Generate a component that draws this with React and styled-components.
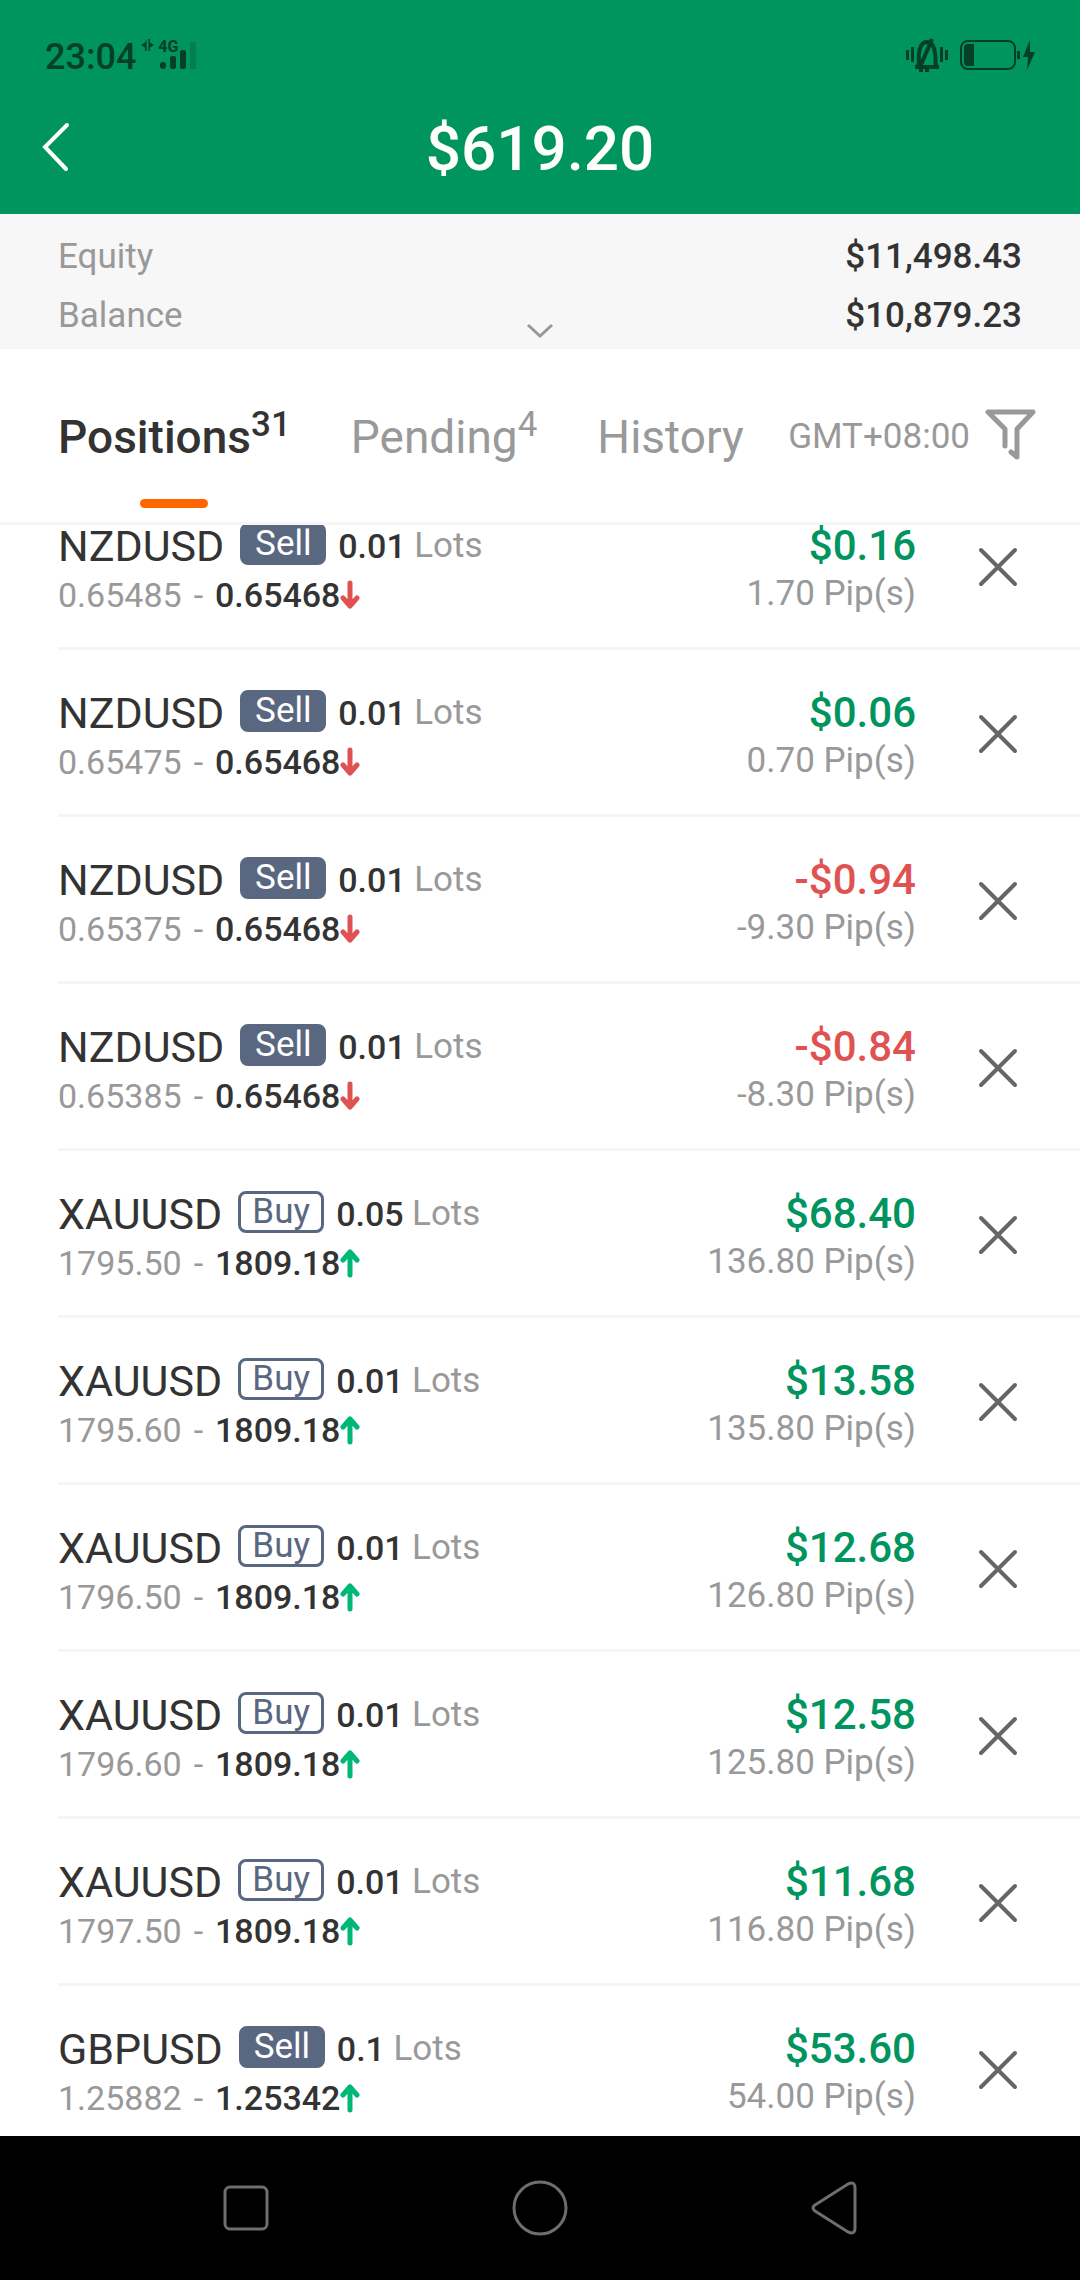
import React from 'react';
import styled, { createGlobalStyle } from 'styled-components';

const GlobalStyle = createGlobalStyle`
	* {
		box-sizing: border-box;
	}

	body {
		margin: 0;
		background: #fff;
		color: #333;
		font-family: Roboto, 'Liberation Sans', sans-serif;
	}

	button {
		padding: 0;
		border: 0;
		background: none;
		color: inherit;
		font: inherit;
		cursor: pointer;
	}

	svg {
		display: block;
		flex: none;
	}
`;

const Page = styled.div`
	display: flex;
	flex-direction: column;
	height: 100vh;
`;

const Header = styled.header`
	background: #00945e;
`;

const StatusBar = styled.div`
	display: flex;
	justify-content: space-between;
	height: 84px;
	padding: 37px 44px 0 45px;
	color: #053f2a;
`;

const StatusGroup = styled.div`
	display: flex;
	align-items: flex-start;
	gap: ${({ $gap }) => $gap}px;
`;

const Clock = styled.span`
	font-size: 36px;
	line-height: 40px;
	font-weight: 500;
`;

const TitleBar = styled.div`
	display: grid;
	grid-template-columns: 112px 1fr 112px;
	align-items: center;
	height: 130px;
	color: #fff;
`;

const BackButton = styled.button`
	height: 80px;
	padding: 0 0 4px 41px;
`;

const Title = styled.h1`
	margin: 0;
	font-size: 62px;
	line-height: 126px;
	font-weight: 500;
	text-align: center;
`;

const Summary = styled.section`
	position: relative;
	height: 135px;
	padding: 13px 58px 0;
	background: #f7f7f7;
`;

const SummaryRow = styled.div`
	display: flex;
	justify-content: space-between;
	font-size: 35px;
	line-height: 59px;
`;

const Label = styled.span`
	color: #999;
`;

const Value = styled.span`
	font-weight: 500;
`;

const ExpandButton = styled.button`
	position: absolute;
	left: 50%;
	bottom: 8px;
	transform: translateX(-50%);
`;

const Toolbar = styled.div`
	display: flex;
	justify-content: space-between;
	height: 176px;
	padding: 0 44px 0 58px;
	border-bottom: 3px solid #f5f5f5;
`;

const Tabs = styled.nav`
	display: flex;
	gap: 60px;
`;

const Tab = styled.button`
	display: flex;
	flex-direction: column;
	align-items: center;
	padding-top: 62px;
	font-size: 46px;
	line-height: 52px;
	font-weight: ${({ $active }) => ($active ? 500 : 400)};
	color: ${({ $active }) => ($active ? '#333' : '#999')};

	&::after {
		content: '';
		width: 68px;
		height: 9px;
		margin-top: 36px;
		border-radius: 5px;
		background: ${({ $active }) => ($active ? '#ff6600' : 'transparent')};
	}
`;

const TabLabel = styled.span`
	display: flex;
`;

const Count = styled.sup`
	font-size: 35px;
	line-height: 28px;
	vertical-align: top;
`;

const FilterButton = styled.button`
	display: flex;
	align-items: flex-start;
	gap: 14px;
	padding-top: 59px;
	font-size: 35px;
	line-height: 58px;
	color: #999;
`;

const ListViewport = styled.main`
	flex: 1 1 0;
	min-height: 0;
	overflow: hidden;
`;

/* the list is scrolled a little way into its first row */
const List = styled.ul`
	margin: -42px 0 0;
	padding: 0 0 0 58px;
	list-style: none;
`;

const Row = styled.li`
	display: flex;
	height: 167px;
	padding-top: 42px;
	border-bottom: 3px solid #f5f5f5;
`;

const Details = styled.div`
	flex: 1;
`;

const Line = styled.div`
	display: flex;
	align-items: center;
	height: 42px;
	margin-bottom: 7px;
	font-size: 34px;
	line-height: 42px;
	white-space: pre;
`;

const Symbol = styled.span`
	margin-right: 16px;
	font-size: 43px;
`;

const Side = styled.span`
	width: 86px;
	height: 42px;
	margin: 0 12px 4px 0;
	border: 3px solid #5a6780;
	border-radius: 8px;
	background: ${({ $sell }) => ($sell ? '#5a6780' : '#fff')};
	color: ${({ $sell }) => ($sell ? '#fff' : '#5a6780')};
	font-size: 35px;
	line-height: 35px;
	text-align: center;
`;

const Lots = styled(Label)`
	font-size: 35px;
`;

const Dash = styled.span`
	margin: 0 12px;
	color: #999;
`;

const Result = styled.div`
	text-align: right;
`;

const Profit = styled.div`
	margin-bottom: 5px;
	font-size: 42px;
	line-height: 42px;
	font-weight: 500;
	color: ${({ $loss }) => ($loss ? '#e05252' : '#00945e')};
`;

const Pips = styled.div`
	font-size: 35px;
	line-height: 44px;
	color: #999;
`;

const CloseButton = styled.button`
	display: flex;
	align-items: center;
	justify-content: center;
	width: 164px;
	height: 84px;
	color: #666;
`;

const NavBar = styled.nav`
	display: grid;
	grid-template-columns: repeat(3, 1fr);
	height: 144px;
	padding: 0 99px;
	background: #000;
	color: #6e6e6e;
`;

const NavButton = styled.button`
	display: flex;
	align-items: center;
	justify-content: center;
`;

const positions = [
	{ symbol: 'NZDUSD', side: 'Sell', lots: '0.01', open: '0.65485', price: '0.65468', trend: 'down', profit: '$0.16', pips: '1.70' },
	{ symbol: 'NZDUSD', side: 'Sell', lots: '0.01', open: '0.65475', price: '0.65468', trend: 'down', profit: '$0.06', pips: '0.70' },
	{ symbol: 'NZDUSD', side: 'Sell', lots: '0.01', open: '0.65375', price: '0.65468', trend: 'down', profit: '-$0.94', pips: '-9.30' },
	{ symbol: 'NZDUSD', side: 'Sell', lots: '0.01', open: '0.65385', price: '0.65468', trend: 'down', profit: '-$0.84', pips: '-8.30' },
	{ symbol: 'XAUUSD', side: 'Buy', lots: '0.05', open: '1795.50', price: '1809.18', trend: 'up', profit: '$68.40', pips: '136.80' },
	{ symbol: 'XAUUSD', side: 'Buy', lots: '0.01', open: '1795.60', price: '1809.18', trend: 'up', profit: '$13.58', pips: '135.80' },
	{ symbol: 'XAUUSD', side: 'Buy', lots: '0.01', open: '1796.50', price: '1809.18', trend: 'up', profit: '$12.68', pips: '126.80' },
	{ symbol: 'XAUUSD', side: 'Buy', lots: '0.01', open: '1796.60', price: '1809.18', trend: 'up', profit: '$12.58', pips: '125.80' },
	{ symbol: 'XAUUSD', side: 'Buy', lots: '0.01', open: '1797.50', price: '1809.18', trend: 'up', profit: '$11.68', pips: '116.80' },
	{ symbol: 'GBPUSD', side: 'Sell', lots: '0.1', open: '1.25882', price: '1.25342', trend: 'up', profit: '$53.60', pips: '54.00' },
];

const NetworkLabel = styled.span`
	font-size: 16px;
	line-height: 20px;
	font-weight: 700;
`;

const Network = styled.div`
	position: relative;
	display: flex;
	align-items: flex-start;
	gap: 4px;
	width: 56px;
`;

const Bars = styled.svg`
	position: absolute;
	left: 18px;
	top: 5px;
`;

function SignalIcon() {
	return (
		<Network>
			<svg width='13' height='16' viewBox='0 0 13 16' fill='currentColor'>
				<path d='M5.500 2v12H4V10.500L0 8l4-2.500zM7.500 2H9v3.500L13 8l-4 2.500V14H7.500z' />
			</svg>
			<NetworkLabel>4G</NetworkLabel>
			<Bars width='38' height='28' viewBox='0 0 38 28' fill='currentColor'>
				<rect x='1' y='20' width='6' height='7' rx='3' />
				<rect x='11' y='14' width='6' height='13' rx='2' />
				<rect x='21' y='8' width='6' height='19' rx='2' />
				<rect x='31' y='0' width='6' height='27' rx='1' opacity='0.25' />
			</Bars>
		</Network>
	);
}

function SilentIcon() {
	return (
		<svg width='42' height='36' viewBox='0 0 42 36' fill='none' stroke='currentColor' strokeWidth='3'>
			<path d='M1.500 13v10M6.500 10v15M35.500 10v15M40.500 13v10' />
			<path d='M9 30h24M12 29c2-4 0-9 1-13 1-7 4-11 8-11s7 4 8 11c1 4 0 9 1 13' strokeWidth='4' />
			<path d='M26 2L14 30M15 31v4M21 31v4' strokeWidth='4' />
		</svg>
	);
}

function BatteryIcon() {
	return (
		<svg width='76' height='36' viewBox='0 -1 76 36' fill='currentColor'>
			<rect x='1' y='3' width='54' height='28' rx='7' fill='none' stroke='currentColor' strokeWidth='2' />
			<path d='M8 6h6v22H8a4 4 0 0 1-4-4V10a4 4 0 0 1 4-4zM57 13h3v8h-3zM70 2L63 19h5l-1 13 8-18h-5z' />
		</svg>
	);
}

function FilterIcon() {
	return (
		<svg width='52' height='56' viewBox='0 0 52 56' fill='none' stroke='currentColor' strokeWidth='5' strokeLinecap='round' strokeLinejoin='round'>
			<path d='M21 38V21L4 4h45L33 21v28l-6-5' />
		</svg>
	);
}

function TrendArrow({ trend }) {
	const up = trend === 'up';
	return (
		<svg width='20' height='30' viewBox='0 0 20 30' fill='none' stroke={up ? '#00b876' : '#e05252'} strokeWidth='5' strokeLinecap='round' strokeLinejoin='round'>
			<path d={up ? 'M10 27V4M3 12l7-8 7 8' : 'M10 3v23M3 18l7 8 7-8'} />
		</svg>
	);
}

function CloseIcon() {
	return (
		<svg width='40' height='40' viewBox='0 0 40 40' stroke='currentColor' strokeWidth='4' strokeLinecap='round'>
			<path d='M3 3l34 34M37 3L3 37' />
		</svg>
	);
}

function Position({ item }) {
	return (
		<Row>
			<Details>
				<Line>
					<Symbol>{item.symbol}</Symbol>
					<Side $sell={item.side === 'Sell'}>{item.side}</Side>
					<Value>{item.lots} </Value>
					<Lots>Lots</Lots>
				</Line>
				<Line>
					<Label>{item.open}</Label>
					<Dash>-</Dash>
					<Value>{item.price}</Value>
					<TrendArrow trend={item.trend} />
				</Line>
			</Details>
			<Result>
				<Profit $loss={item.profit.startsWith('-')}>{item.profit}</Profit>
				<Pips>{item.pips} Pip(s)</Pips>
			</Result>
			<CloseButton aria-label='Close position'>
				<CloseIcon />
			</CloseButton>
		</Row>
	);
}

function App() {
	return (
		<Page>
			<GlobalStyle />
			<Header>
				<StatusBar>
					<StatusGroup $gap={5}>
						<Clock>23:04</Clock>
						<SignalIcon />
					</StatusGroup>
					<StatusGroup $gap={12}>
						<SilentIcon />
						<BatteryIcon />
					</StatusGroup>
				</StatusBar>
				<TitleBar>
					<BackButton aria-label='Back'>
						<svg width='30' height='50' viewBox='0 0 30 50' fill='none' stroke='currentColor' strokeWidth='4' strokeLinecap='round'>
							<path d='M26 3L4 25l21 22' />
						</svg>
					</BackButton>
					<Title>$619.20</Title>
				</TitleBar>
			</Header>
			<Summary>
				<SummaryRow>
					<Label>Equity</Label>
					<Value>$11,498.43</Value>
				</SummaryRow>
				<SummaryRow>
					<Label>Balance</Label>
					<Value>$10,879.23</Value>
				</SummaryRow>
				<ExpandButton aria-label='Show more'>
					<svg width='28' height='18' viewBox='0 0 28 18' fill='none' stroke='#999' strokeWidth='3'>
						<path d='M2 2l12 11L26 2' />
					</svg>
				</ExpandButton>
			</Summary>
			<Toolbar>
				<Tabs>
					<Tab $active>
						<TabLabel>
							Positions<Count>31</Count>
						</TabLabel>
					</Tab>
					<Tab>
						<TabLabel>
							Pending<Count>4</Count>
						</TabLabel>
					</Tab>
					<Tab>
						<TabLabel>History</TabLabel>
					</Tab>
				</Tabs>
				<FilterButton>
					GMT+08:00
					<FilterIcon />
				</FilterButton>
			</Toolbar>
			<ListViewport>
				<List>
					{positions.map((item, index) => (
						<Position key={index} item={item} />
					))}
				</List>
			</ListViewport>
			<NavBar>
				<NavButton aria-label='Recent apps'>
					<svg width='46' height='46' viewBox='0 0 46 46' fill='none' stroke='currentColor' strokeWidth='3'>
						<rect x='2' y='2' width='42' height='42' rx='5' />
					</svg>
				</NavButton>
				<NavButton aria-label='Home'>
					<svg width='56' height='56' viewBox='0 0 56 56' fill='none' stroke='currentColor' strokeWidth='3'>
						<circle cx='28' cy='28' r='26' />
					</svg>
				</NavButton>
				<NavButton aria-label='Back'>
					<svg width='46' height='54' viewBox='0 0 46 54' fill='none' stroke='currentColor' strokeWidth='3'>
						<path d='M4 24L37 3q7-3 7 4v40q0 7-7 4L4 30q-4-3 0-6z' />
					</svg>
				</NavButton>
			</NavBar>
		</Page>
	);
}

export default App;
